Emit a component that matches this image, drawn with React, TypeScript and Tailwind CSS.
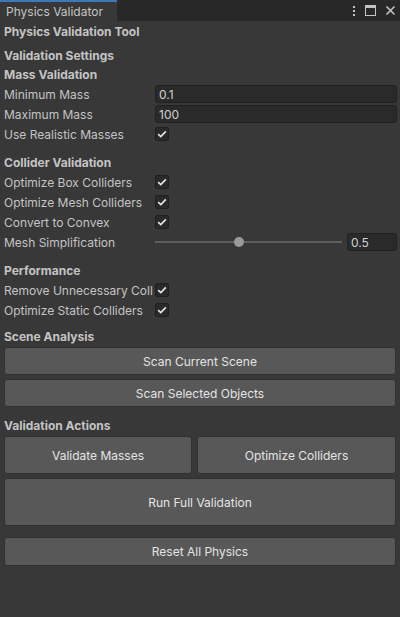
import React from "react"

// Unity-style editor window: Physics Validator

const font = { fontFamily: "Inter, 'Noto Sans', sans-serif" }

function Check() {
  return (
    <div className="flex h-[14px] w-[14px] items-center justify-center rounded-[2px] border border-[#1f1f1f] bg-[#2a2a2a]">
      <svg width="10" height="8" viewBox="0 0 10 8" fill="none">
        <path d="M1.2 4.2 L3.8 6.6 L8.8 1.4" stroke="#e8e8e8" strokeWidth="1.6" />
      </svg>
    </div>
  )
}

function Header({ children, className = "" }: { children: React.ReactNode; className?: string }) {
  return (
    <div className={`flex h-[18px] items-center px-[4px] pt-[1px] text-[12px] font-bold text-[#c4c4c4] ${className}`}>
      {children}
    </div>
  )
}

function Row({ label, children }: { label: string; children: React.ReactNode }) {
  return (
    <div className="mb-[2px] flex h-[18px] items-center">
      <div className="w-[155px] overflow-hidden whitespace-nowrap pl-[4px] pt-[1px] text-[12px] text-[#c4c4c4]">{label}</div>
      <div className="flex flex-1 items-center pr-[3px]">{children}</div>
    </div>
  )
}

function Field({ value }: { value: string }) {
  return (
    <div className="flex h-[18px] flex-1 items-center rounded-[3px] border border-[#212121] bg-[#2a2a2a] px-[3px] pt-[1px] text-[12px] text-[#d2d2d2]">
      {value}
    </div>
  )
}

function Btn({ label, h = "h-[28px]", className = "" }: { label: string; h?: string; className?: string }) {
  return (
    <div
      className={`flex ${h} items-center justify-center rounded-[3px] border border-[#303030] bg-[#585858] pt-[1px] text-[12px] text-[#e4e4e4] ${className}`}
    >
      {label}
    </div>
  )
}

export default function App() {
  return (
    <div className="flex h-[617px] w-[400px] flex-col bg-[#383838]" style={font}>
      {/* tab strip */}
      <div className="flex h-[21px] items-stretch bg-[#282828]">
        <div className="flex w-[117px] items-center border-t-2 border-[#3a79bb] bg-[#383838] pl-[6px] text-[12px] text-[#c4c4c4]">
          Physics Validator
        </div>
        <div className="flex flex-1 items-center justify-end gap-[9px] pr-[4px]">
          <svg width="4" height="12" viewBox="0 0 4 12">
            <rect x="1" y="1" width="2" height="2" fill="#c4c4c4" />
            <rect x="1" y="5" width="2" height="2" fill="#c4c4c4" />
            <rect x="1" y="9" width="2" height="2" fill="#c4c4c4" />
          </svg>
          <svg width="11" height="11" viewBox="0 0 11 11">
            <rect x="0.5" y="0.5" width="10" height="10" fill="none" stroke="#c4c4c4" />
            <rect x="0.5" y="0.5" width="10" height="2.5" fill="#c4c4c4" />
          </svg>
          <svg width="11" height="11" viewBox="0 0 11 11">
            <path d="M1.5 1.5 L9.5 9.5 M9.5 1.5 L1.5 9.5" stroke="#c4c4c4" strokeWidth="1.6" />
          </svg>
        </div>
      </div>

      <Header className="mt-[1px]">Physics Validation Tool</Header>

      <Header className="mt-[6px]">Validation Settings</Header>
      <Header className="mt-[1px] mb-[2px]">Mass Validation</Header>
      <Row label="Minimum Mass">
        <Field value="0.1" />
      </Row>
      <Row label="Maximum Mass">
        <Field value="100" />
      </Row>
      <Row label="Use Realistic Masses">
        <Check />
      </Row>

      <Header className="mt-[8px] mb-[2px]">Collider Validation</Header>
      <Row label="Optimize Box Colliders">
        <Check />
      </Row>
      <Row label="Optimize Mesh Colliders">
        <Check />
      </Row>
      <Row label="Convert to Convex">
        <Check />
      </Row>
      <Row label="Mesh Simplification">
        <div className="relative mr-[5px] flex h-[18px] flex-1 items-center">
          <div className="h-[2px] w-full bg-[#5e5e5e]" />
          <div className="absolute left-[79px] top-[4px] h-[10px] w-[10px] rounded-full bg-[#999999]" />
        </div>
        <div className="flex h-[18px] w-[50px] items-center rounded-[3px] border border-[#212121] bg-[#2a2a2a] px-[3px] pt-[1px] text-[12px] text-[#d2d2d2]">
          0.5
        </div>
      </Row>

      <Header className="mt-[8px] mb-[2px]">Performance</Header>
      <Row label="Remove Unnecessary Coll">
        <Check />
      </Row>
      <Row label="Optimize Static Colliders">
        <Check />
      </Row>

      <Header className="mt-[6px] mb-[2px]">Scene Analysis</Header>
      <div className="flex flex-col gap-[4px] px-[4px]">
        <Btn label="Scan Current Scene" />
        <Btn label="Scan Selected Objects" />
      </div>

      <Header className="mt-[9px] mb-[2px]">Validation Actions</Header>
      <div className="flex flex-col gap-[4px] px-[4px]">
        <div className="flex gap-[5px]">
          <Btn label="Validate Masses" h="h-[38px]" className="w-[188px]" />
          <Btn label="Optimize Colliders" h="h-[38px]" className="flex-1" />
        </div>
        <Btn label="Run Full Validation" h="h-[48px]" />
        <Btn label="Reset All Physics" h="h-[29px]" className="mt-[7px]" />
      </div>
    </div>
  )
}
